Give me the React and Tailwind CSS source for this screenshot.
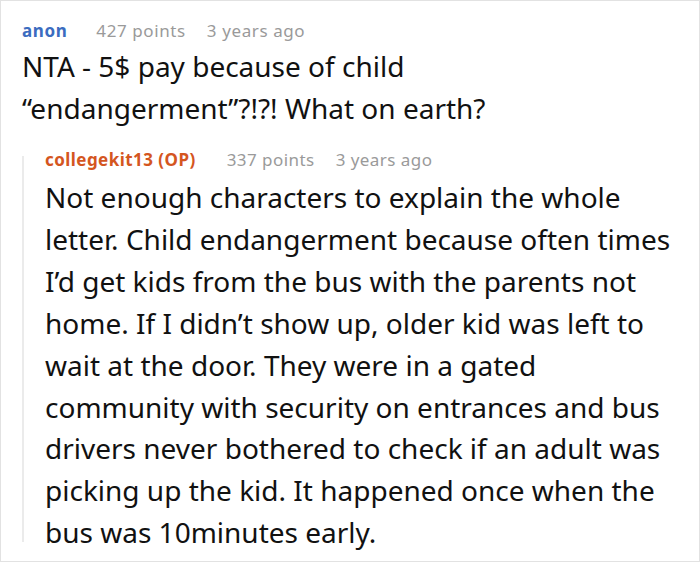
const mainLines = [
  "NTA - 5$ pay because of child",
  "“endangerment”?!?! What on earth?",
];

const replyLines = [
  "Not enough characters to explain the whole",
  "letter. Child endangerment because often times",
  "I’d get kids from the bus with the parents not",
  "home. If I didn’t show up, older kid was left to",
  "wait at the door. They were in a gated",
  "community with security on entrances and bus",
  "drivers never bothered to check if an adult was",
  "picking up the kid. It happened once when the",
  "bus was 10minutes early.",
];

export default function App() {
  return (
    <div
      className="w-[700px] h-[562px] border border-[#e2e2e2] bg-white overflow-hidden"
      style={{ fontFamily: '"Noto Sans", sans-serif' }}
    >
      <div className="pl-[21px] pt-[16px]">
        <div className="flex items-baseline text-[17px] leading-[28px] tracking-[0.6px]">
          <span className="font-bold text-[#3b6cc0]">anon</span>
          <span className="ml-[29px] text-[#9a9a9a]">427 points</span>
          <span className="ml-[21px] text-[#9a9a9a]">3 years ago</span>
        </div>
        <div className="text-[28px] leading-[42px] text-[#111]">
          {mainLines.map((l) => (
            <div key={l} className="whitespace-nowrap">{l}</div>
          ))}
        </div>
        <div className="mt-[17px] flex">
          <div className="w-[2px] bg-[#ebebeb] mt-[10px] mb-[12px] shrink-0" />
          <div className="pl-[21px]">
            <div className="flex items-baseline text-[17px] leading-[28px] tracking-[0.45px]">
              <span className="font-bold text-[#d4561f]">collegekit13 (OP)</span>
              <span className="ml-[31px] text-[#9a9a9a]">337 points</span>
              <span className="ml-[21px] text-[#9a9a9a]">3 years ago</span>
            </div>
            <div className="text-[28px] leading-[41.9px] text-[#111] mt-[3px]">
              {replyLines.map((l) => (
                <div key={l} className="whitespace-nowrap">{l}</div>
              ))}
            </div>
          </div>
        </div>
      </div>
    </div>
  );
}
